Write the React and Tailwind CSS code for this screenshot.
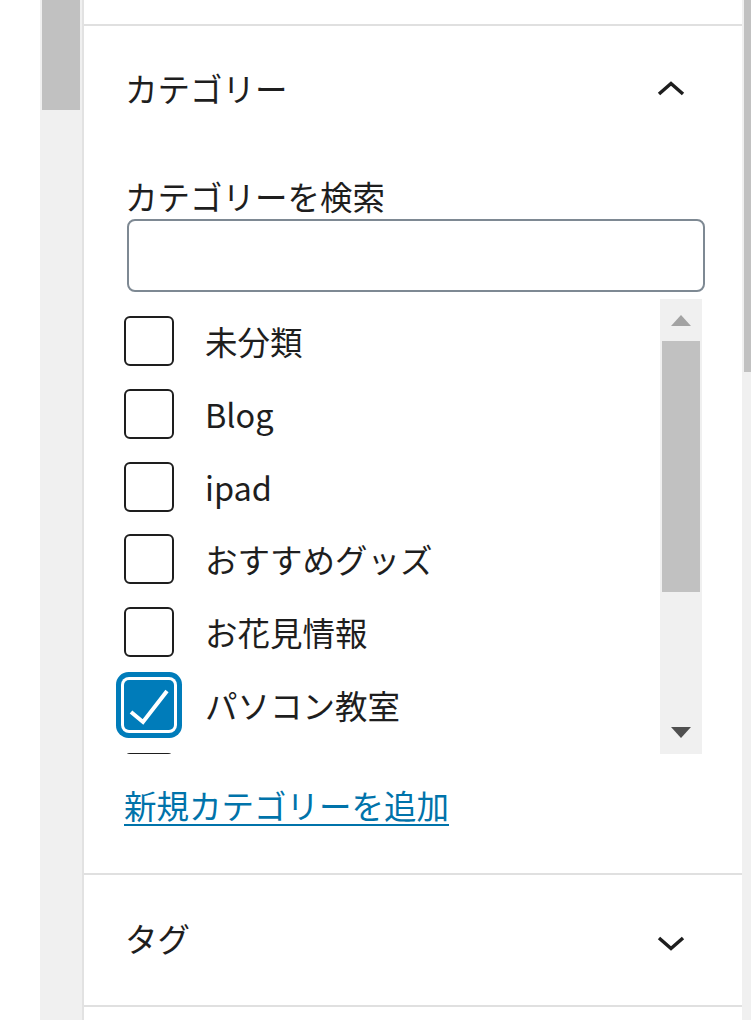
import React from "react";

const FONT = { fontFamily: '"Noto Sans CJK JP", "Noto Sans", sans-serif' };

function Chevron({ up }) {
  return (
    <svg width="28" height="15" viewBox="0 0 28 15" fill="none">
      <polyline
        points={up ? "2,13 14,2.5 26,13" : "2,2 14,12.5 26,2"}
        stroke="#1e1e1e"
        strokeWidth="3.5"
      />
    </svg>
  );
}

function Checkbox({ checked }) {
  if (checked) {
    return (
      <div className="w-[50px] h-[50px] shrink-0 rounded-[5px] bg-[#007cba] shadow-[0_0_0_3px_#ffffff,0_0_0_8px_#007cba] flex items-center justify-center">
        <svg width="50" height="50" viewBox="0 0 50 50" fill="none">
          <polyline points="7,32 19,42 43,11" stroke="#ffffff" strokeWidth="4" strokeLinejoin="miter" />
        </svg>
      </div>
    );
  }
  return <div className="w-[50px] h-[50px] shrink-0 rounded-[6px] border-2 border-[#1e1e1e] bg-white" />;
}

const items = [
  { label: "未分類" },
  { label: "Blog" },
  { label: "ipad" },
  { label: "おすすめグッズ" },
  { label: "お花見情報" },
  { label: "パソコン教室", checked: true },
  { label: "" },
];

export default function App() {
  return (
    <div className="w-[751px] h-[1020px] flex bg-white overflow-hidden text-[#1e1e1e]" style={FONT}>
      <div className="w-[40px] shrink-0 bg-white" />
      <div className="w-[42px] shrink-0 bg-[#f0f0f0]">
        <div className="ml-[2px] w-[38px] h-[110px] bg-[#c1c1c1]" />
      </div>
      <div className="w-[2px] shrink-0 bg-[#e2e2e2]" />

      <div className="w-[658px] shrink-0 flex flex-col bg-white">
        <div className="h-[24px] shrink-0" />

        {/* Category panel */}
        <div className="border-t-2 border-[#e0e0e0] flex flex-col">
          <div className="h-[124px] flex items-center justify-between pl-[41px] pr-[57px]">
            <span className="text-[32.5px] leading-[40px]">カテゴリー</span>
            <Chevron up />
          </div>

          <div className="px-[40px] flex flex-col">
            <div className="mt-[26px] text-[32.5px] leading-[40px] pl-[1px]">カテゴリーを検索</div>
            <div className="mt-[3px] ml-[3px] w-[578px] h-[73px] rounded-[8px] border-2 border-[#7e8993] bg-white" />

            <div className="mt-[7px] h-[455px] flex">
              <div className="flex-1 overflow-hidden -ml-[12px] pl-[12px]">
                <div className="pt-[17px] flex flex-col gap-[22.75px]">
                  {items.map((it, i) => (
                    <div key={i} className="h-[50px] flex items-center">
                      <Checkbox checked={it.checked} />
                      {it.label && (
                        <span className="ml-[31px] text-[32.5px] leading-[40px] whitespace-nowrap">{it.label}</span>
                      )}
                    </div>
                  ))}
                </div>
              </div>
              <div className="w-[42px] shrink-0 bg-[#f0f0f0] flex flex-col">
                <div className="h-[42px] flex items-center justify-center">
                  <svg width="20" height="11" viewBox="0 0 20 11">
                    <polygon points="10,0 20,11 0,11" fill="#a3a3a3" />
                  </svg>
                </div>
                <div className="mx-[2px] h-[251px] bg-[#c1c1c1]" />
                <div className="flex-1" />
                <div className="h-[42px] flex items-center justify-center pb-[2px]">
                  <svg width="20" height="11" viewBox="0 0 20 11">
                    <polygon points="0,0 20,0 10,11" fill="#505050" />
                  </svg>
                </div>
              </div>
            </div>

            <div className="mt-[31px] mb-[48px] text-[32.5px] leading-[40px]">
              <span className="text-[#0073aa] underline decoration-2 underline-offset-[5px]">新規カテゴリーを追加</span>
            </div>
          </div>
        </div>

        {/* Tag panel */}
        <div className="border-t-2 border-[#e0e0e0]">
          <div className="h-[130px] flex items-center justify-between pl-[41px] pr-[57px]">
            <span className="text-[32.5px] leading-[40px] -mt-[4px]">タグ</span>
            <div className="pt-[6px]">
              <Chevron />
            </div>
          </div>
        </div>

        <div className="border-t-2 border-[#e0e0e0] flex-1" />
      </div>

      <div className="flex-1 bg-[#f0f0f0]">
        <div className="ml-[2px] h-[372px] bg-[#c1c1c1]" />
      </div>
    </div>
  );
}
